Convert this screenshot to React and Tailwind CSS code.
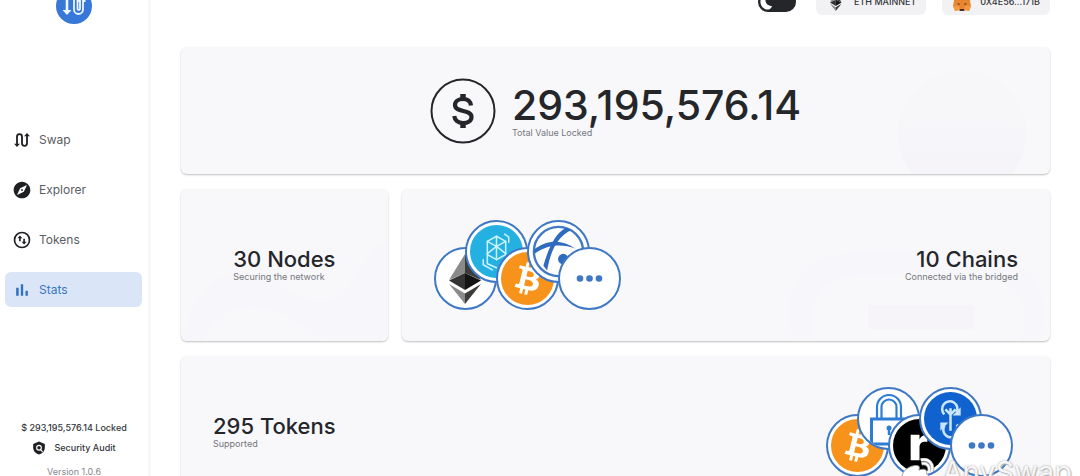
const RING = "border-[#3f78c4]";

function EthMark({ className }) {
  return (
    <svg viewBox="0 0 32 50" className={className} aria-hidden="true">
      <path d="M16 0 0 26l16-7z" fill="#8a8a8a" />
      <path d="M16 0v19l16 7z" fill="#3c3c3b" />
      <path d="M0 26.5 16 19v17z" fill="#343434" />
      <path d="M32 26.5 16 19v17z" fill="#141414" />
      <path d="M0 30l16 9.500V50z" fill="#8a8a8a" />
      <path d="M32 30l-16 9.500V50z" fill="#3c3c3b" />
    </svg>
  );
}

function BitcoinMark() {
  return (
    <svg viewBox="0 0 32 32" className="size-full" aria-hidden="true">
      <circle cx="16" cy="16" r="16" fill="#f7931a" />
      <path
        fill="#fff"
        d="M23.189 14.020c.314-2.096-1.283-3.223-3.465-3.975l.708-2.840-1.728-.43-.69 2.765c-.454-.114-.92-.22-1.385-.326l.695-2.783L15.596 6l-.708 2.839c-.376-.086-.746-.17-1.104-.26l.002-.009-2.384-.595-.46 1.846s1.283.294 1.256.312c.7.175.826.638.805 1.006l-.806 3.235c.048.012.110.03.180.057l-.183-.045-1.130 4.532c-.086.212-.303.531-.793.410.018.025-1.256-.313-1.256-.313l-.858 1.978 2.250.561c.418.105.828.215 1.231.318l-.715 2.872 1.727.430.708-2.840c.472.127.930.245 1.378.357l-.706 2.828 1.728.430.715-2.866c2.948.558 5.164.333 6.097-2.333.752-2.146-.037-3.385-1.588-4.192 1.130-.260 1.980-1.003 2.207-2.538zm-3.950 5.538c-.533 2.147-4.148.986-5.320.695l.950-3.805c1.172.293 4.929.872 4.370 3.110zm.535-5.569c-.487 1.953-3.495.960-4.470.717l.860-3.450c.975.243 4.118.696 3.610 2.733z"
      />
    </svg>
  );
}

function FantomMark() {
  return (
    <svg viewBox="0 0 52 52" className="size-full" aria-hidden="true">
      <circle cx="26" cy="26" r="26" fill="#25b0e2" />
      <g fill="none" stroke="#c9f3ff" strokeWidth="1.500" strokeLinejoin="round" strokeLinecap="round">
        <path d="M26 11l9 5v13l-9 5-9-5V16z" />
        <path d="M17 16l9 5 9-5M26 11v10M26 21l-9 7M26 21l9 7M26 21v13M17 29v9l9 4" />
        <path d="M34 9l4 3v5M22 44l-9-5v-5" />
      </g>
    </svg>
  );
}

function FusionMark() {
  return (
    <svg viewBox="0 0 56 56" className="size-full" aria-hidden="true">
      <circle cx="28" cy="28" r="26" fill="#fff" stroke="#3f78c4" strokeWidth="2.500" />
      <g fill="#2f6cc0">
        <path d="M36 3C24 9 17 26 12 43l4 5C19 31 25 13 42 5z" />
        <path d="M2 26C16 15 32 15 46 25 32 20 18 20 3 30z" />
        <circle cx="33" cy="36" r="5.500" />
      </g>
    </svg>
  );
}

function PadlockMark() {
  return (
    <svg viewBox="0 0 59 59" className="size-full" fill="none" stroke="#2d7cd6" aria-hidden="true">
      <path d="M18 29V18a12 12 0 0 1 24 0v11M22.500 29V18a7.500 7.500 0 0 1 15 0v11" strokeWidth="2.200" />
      <path d="M12.500 30h35v25h-35z" strokeWidth="3" />
      <circle cx="30" cy="39" r="2.500" fill="#2d7cd6" stroke="none" />
      <path d="M30 39v7" strokeWidth="2.500" />
    </svg>
  );
}

function RenMark() {
  return (
    <svg viewBox="0 0 54 54" className="size-full" aria-hidden="true">
      <circle cx="27" cy="27" r="27" fill="#000" />
      <path d="M18 16h9v5c1-3 4-5 8-4.500v7c-5-1-8 1-8 5.500v13h-9z" fill="#fff" />
    </svg>
  );
}

function YearnMark() {
  return (
    <svg viewBox="0 0 52 52" className="size-full" aria-hidden="true">
      <circle cx="26" cy="26" r="26" fill="#1062cf" />
      <g fill="none" stroke="#c9e6fb" strokeWidth="2.500">
        <path d="M20 22a7.500 7.500 0 1 1 12-2M26 16v22M21 17l5 5 5-5" />
        <path d="M32 32a7.500 7.500 0 1 1-12 1" />
      </g>
      <path d="M36 15v8h-8zM16 38v-8h8z" fill="#c9e6fb" />
    </svg>
  );
}

function MoreMark() {
  return (
    <svg viewBox="0 0 59 59" className="size-full" fill="#3f78c4" aria-hidden="true">
      <circle cx="20" cy="29.500" r="3.300" />
      <circle cx="29.500" cy="29.500" r="3.300" />
      <circle cx="39" cy="29.500" r="3.300" />
    </svg>
  );
}

function Coin({ raised, inset, children }) {
  return (
    <li
      className={`flex size-[63px] shrink-0 items-center justify-center overflow-hidden rounded-full border-2 ${RING} bg-white not-first:-ml-8 ${
        raised ? "self-start" : "self-end"
      } ${inset ? "p-[3px]" : ""}`}
    >
      {children}
    </li>
  );
}

function SwapGlyph() {
  return (
    <svg viewBox="0 0 24 24" className="size-5" fill="none" stroke="currentColor" strokeWidth="2.200" aria-hidden="true">
      <path d="M6 18V8a3 3 0 0 1 6 0v8a3 3 0 0 0 6 0V6" />
      <path d="M2.500 16.500h7L6 20.500zM14.500 7.500h7L18 3.500z" fill="currentColor" stroke="none" />
    </svg>
  );
}

function LogoGlyph() {
  return (
    <svg viewBox="0 0 36 36" className="size-9 shrink-0" aria-hidden="true">
      <circle cx="18" cy="18" r="18" fill="#3677d8" />
      <g fill="none" stroke="#eef6ff" strokeWidth="1.800">
        <path d="M11 8v15" strokeWidth="2.600" />
        <path d="M18 10v11.500a4.500 4.500 0 0 0 9 0V13h2.500M21.500 10v11a1.300 1.300 0 0 0 2.500 0V13h-2" />
      </g>
      <path d="M6.500 22h9L11 27z" fill="#eef6ff" />
    </svg>
  );
}

function CompassGlyph() {
  return (
    <svg viewBox="0 0 24 24" className="size-5" fill="currentColor" aria-hidden="true">
      <path d="M12 10.900c-.610 0-1.100.490-1.100 1.100s.490 1.100 1.100 1.100c.610 0 1.100-.490 1.100-1.100s-.490-1.100-1.100-1.100zM12 2C6.480 2 2 6.480 2 12s4.480 10 10 10 10-4.480 10-10S17.520 2 12 2zm2.190 12.190L6 18l3.810-8.190L18 6l-3.810 8.190z" />
    </svg>
  );
}

function TokensGlyph() {
  return (
    <svg viewBox="0 0 24 24" className="size-5" fill="none" stroke="currentColor" strokeWidth="2" aria-hidden="true">
      <circle cx="12" cy="12" r="9" />
      <path d="M9.500 8v5.500M14.500 16v-5.500" />
      <path d="M6.500 10 9.500 6.500l3 3.500zM11.500 14l3 3.500 3-3.500z" fill="currentColor" stroke="none" />
    </svg>
  );
}

function BarsGlyph() {
  return (
    <svg viewBox="0 0 24 24" className="size-5" fill="currentColor" aria-hidden="true">
      <path d="M5 9.200h3V19H5zM10.600 5h2.800v14h-2.800zM16.200 13H19v6h-2.800z" />
    </svg>
  );
}

function ShieldGlyph() {
  return (
    <svg viewBox="0 0 24 24" className="size-[14px]" aria-hidden="true">
      <path d="M12 1 2 5v6c0 5.550 4 10.740 10 12 6-1.260 10-6.450 10-12V5z" fill="#202124" />
      <circle cx="12" cy="11.500" r="4" fill="none" stroke="#fff" strokeWidth="2" />
      <path d="M14 14l4 4.500" stroke="#fff" strokeWidth="2" />
    </svg>
  );
}

function FoxMark() {
  return (
    <svg viewBox="0 0 20 20" className="size-5" aria-hidden="true">
      <path d="M1 1l7 4h4l7-4-1 8 1 5-2 5-4-1-2 1H9l-2-1-4 1-2-5 1-5z" fill="#e8852f" />
      <path d="M1 14l6 0 1 4-5 1zM19 14h-6l-1 4 5 1z" fill="#f39a45" />
      <path d="M5 11l3 1-1 1zM15 11l-3 1 1 1z" fill="#3b2a24" />
      <path d="M8 17h4l.5 2h-5z" fill="#4b2a2a" />
    </svg>
  );
}

const NAV = [
  { label: "Swap", icon: <SwapGlyph /> },
  { label: "Explorer", icon: <CompassGlyph /> },
  { label: "Tokens", icon: <TokensGlyph /> },
  { label: "Stats", icon: <BarsGlyph />, active: true },
];

function Sidebar() {
  return (
    <aside className="flex w-[151px] shrink-0 flex-col border-r-3 border-[#f8f8f9]">
      <div className="flex h-6 items-end justify-center">
        <LogoGlyph />
      </div>
      <nav className="mt-[98px] flex flex-col gap-[15px] pr-[6px] pl-[5px]">
        {NAV.map((item) => (
          <a
            key={item.label}
            href="#"
            aria-current={item.active ? "page" : undefined}
            className={`flex h-[35px] items-center gap-[7px] rounded-md px-[7px] text-[12px] ${
              item.active ? "bg-[#dae6f7] text-[#3a76c4]" : "text-[#5a5d63]"
            }`}
          >
            <span className={item.active ? "text-[#2f6fc4]" : "text-[#202124]"}>{item.icon}</span>
            {item.label}
          </a>
        ))}
      </nav>
      <div className="mt-auto flex flex-col items-center text-[9px] leading-4 font-medium text-[#33363b]">
        <p>$ 293,195,576.14 Locked</p>
        <a href="#" className="mt-1 flex items-center gap-2">
          <ShieldGlyph />
          Security Audit
        </a>
        <p className="-mb-1 mt-2 font-normal text-[#85878c]">Version 1.0.6</p>
      </div>
    </aside>
  );
}

function TopBar() {
  return (
    <header className="flex h-[15px] items-end justify-end gap-4 text-[9px] font-medium text-[#33363b]">
      <button
        type="button"
        role="switch"
        aria-checked="false"
        aria-label="Dark mode"
        className="mr-1 mb-[3px] flex h-5 w-[38px] shrink-0 items-center rounded-full bg-[#24262a] px-[2px]"
      >
        <svg viewBox="0 0 16 16" className="size-4" aria-hidden="true">
          <path d="M3 2a8 8 0 0 0 3 13.500c3 .5 5-.5 6-3.500-5 0-8-4-6-10z" fill="#fff" />
        </svg>
      </button>
      <button type="button" className="flex h-[26px] shrink-0 items-center gap-2 rounded-md bg-[#f2f2f4] px-[10px]">
        <span className="flex w-5 justify-center">
          <EthMark className="h-[18px]" />
        </span>
        ETH MAINNET
      </button>
      <button type="button" className="flex h-[26px] shrink-0 items-center gap-2 rounded-md bg-[#f2f2f4] px-[10px]">
        <FoxMark />
        0X4E56...171B
      </button>
    </header>
  );
}

const CARD = "relative flex items-center overflow-hidden rounded-md bg-[#f8f8fb] shadow-[0_1px_2px_rgba(0,0,0,0.25)]";

function Figure({ value, label, align = "" }) {
  return (
    <div className={`relative ${align}`}>
      <h2 className="text-[22px] leading-6 font-medium text-[#24262a]">{value}</h2>
      <p className="text-[9px] leading-3 text-[#75777d]">{label}</p>
    </div>
  );
}

function Watermark() {
  return (
    <div className="pointer-events-none absolute right-2 -bottom-3 flex items-center gap-2">
      <svg viewBox="0 0 36 30" className="h-7 w-9" aria-hidden="true">
        <path d="M2 20c0-7 9-12 15-12 4 0 4 2 3 5 5-2 10-1 8 4 8 4 1 12-11 12C8 29 2 26 2 20z" fill="#fff" stroke="#999" strokeWidth="1" />
        <path d="M23 6c6-1 9 3 8 8M22 2c9-2 14 5 12 12" fill="none" stroke="#999" strokeWidth="4" />
        <path d="M23 6c6-1 9 3 8 8M22 2c9-2 14 5 12 12" fill="none" stroke="#fff" strokeWidth="2.500" />
      </svg>
      <span className="text-[29px] leading-8 text-white/90 [text-shadow:0_0_2px_#999,1px_1px_1px_#bbb]">AnySwap</span>
    </div>
  );
}

export default function App() {
  return (
    <div className="relative flex h-screen overflow-hidden bg-white font-['Inter',sans-serif]">
      <Sidebar />
      <main className="min-w-0 flex-1 px-[30px]">
        <TopBar />
        <div className="mt-8 flex flex-col gap-[15px]">
          <section className={`${CARD} min-h-[127px] justify-center gap-4`}>
            <div className="absolute right-6 -bottom-6 size-32 rounded-full bg-linear-to-b from-[#f7f7f9] to-[#f5f3f8]" />
            <svg viewBox="0 0 66 66" className="size-[66px]" aria-hidden="true">
              <circle cx="33" cy="33" r="31.500" fill="none" stroke="#24262a" strokeWidth="2" />
              <g fill="none" stroke="#24262a" strokeWidth="4.200">
                <path d="M41 27.500c-.500-4-3.500-6.500-8-6.500-4.600 0-8 2.300-8 6 0 8 16.500 4 16.500 12 0 4-3.600 6-8.500 6s-8.300-2.600-8.700-7" />
                <path d="M33 16v5M33 45v5" strokeWidth="5.500" />
              </g>
            </svg>
            <div className="relative">
              <h1 className="text-[41px] leading-[44px] font-medium text-[#24262a]">293,195,576.14</h1>
              <p className="text-[9px] leading-3 text-[#75777d]">Total Value Locked</p>
            </div>
          </section>

          <div className="grid grid-cols-[207fr_649fr] gap-[14px]">
            <section className={`${CARD} min-h-[152px] justify-center`}>
              <svg viewBox="0 0 207 152" className="absolute inset-0 size-full" aria-hidden="true">
                <path d="M0 152C15 100 35 84 60 84c45 0 55 36 85 28 30-8 35-50 62-62v102h-60c-20-8-45-34-75-34-25 0-40 14-50 34z" fill="#f7f6fa" />
              </svg>
              <Figure value="30 Nodes" label="Securing the network" />
            </section>
            <section className={`${CARD} min-h-[152px] justify-between px-8`}>
              <svg viewBox="0 0 262 90" className="absolute right-0 bottom-0 h-[90px] w-[262px]" aria-hidden="true">
                <path d="M5 90C-12 20 30 0 80 0h100c50 0 92 30 70 90h-18c16-40-10-66-52-66H80C40 24 15 44 28 90z" fill="#f7f6fa" />
                <path d="M80 54h106v24H80z" fill="#f6f4f9" />
              </svg>
              <ul className="relative flex h-[90px]">
                <Coin><EthMark className="h-[50px]" /></Coin>
                <Coin raised inset><FantomMark /></Coin>
                <Coin inset><BitcoinMark /></Coin>
                <Coin raised inset><FusionMark /></Coin>
                <Coin><MoreMark /></Coin>
              </ul>
              <Figure value="10 Chains" label="Connected via the bridged" align="text-right" />
            </section>
          </div>

          <section className={`${CARD} min-h-[152px] justify-between pr-[37px] pl-8`}>
            <Figure value="295 Tokens" label="Supported" />
            <ul className="relative flex h-[90px]">
              <Coin inset><BitcoinMark /></Coin>
              <Coin raised><PadlockMark /></Coin>
              <Coin inset><RenMark /></Coin>
              <Coin raised inset><YearnMark /></Coin>
              <Coin><MoreMark /></Coin>
            </ul>
          </section>
        </div>
      </main>
      <Watermark />
    </div>
  );
}
